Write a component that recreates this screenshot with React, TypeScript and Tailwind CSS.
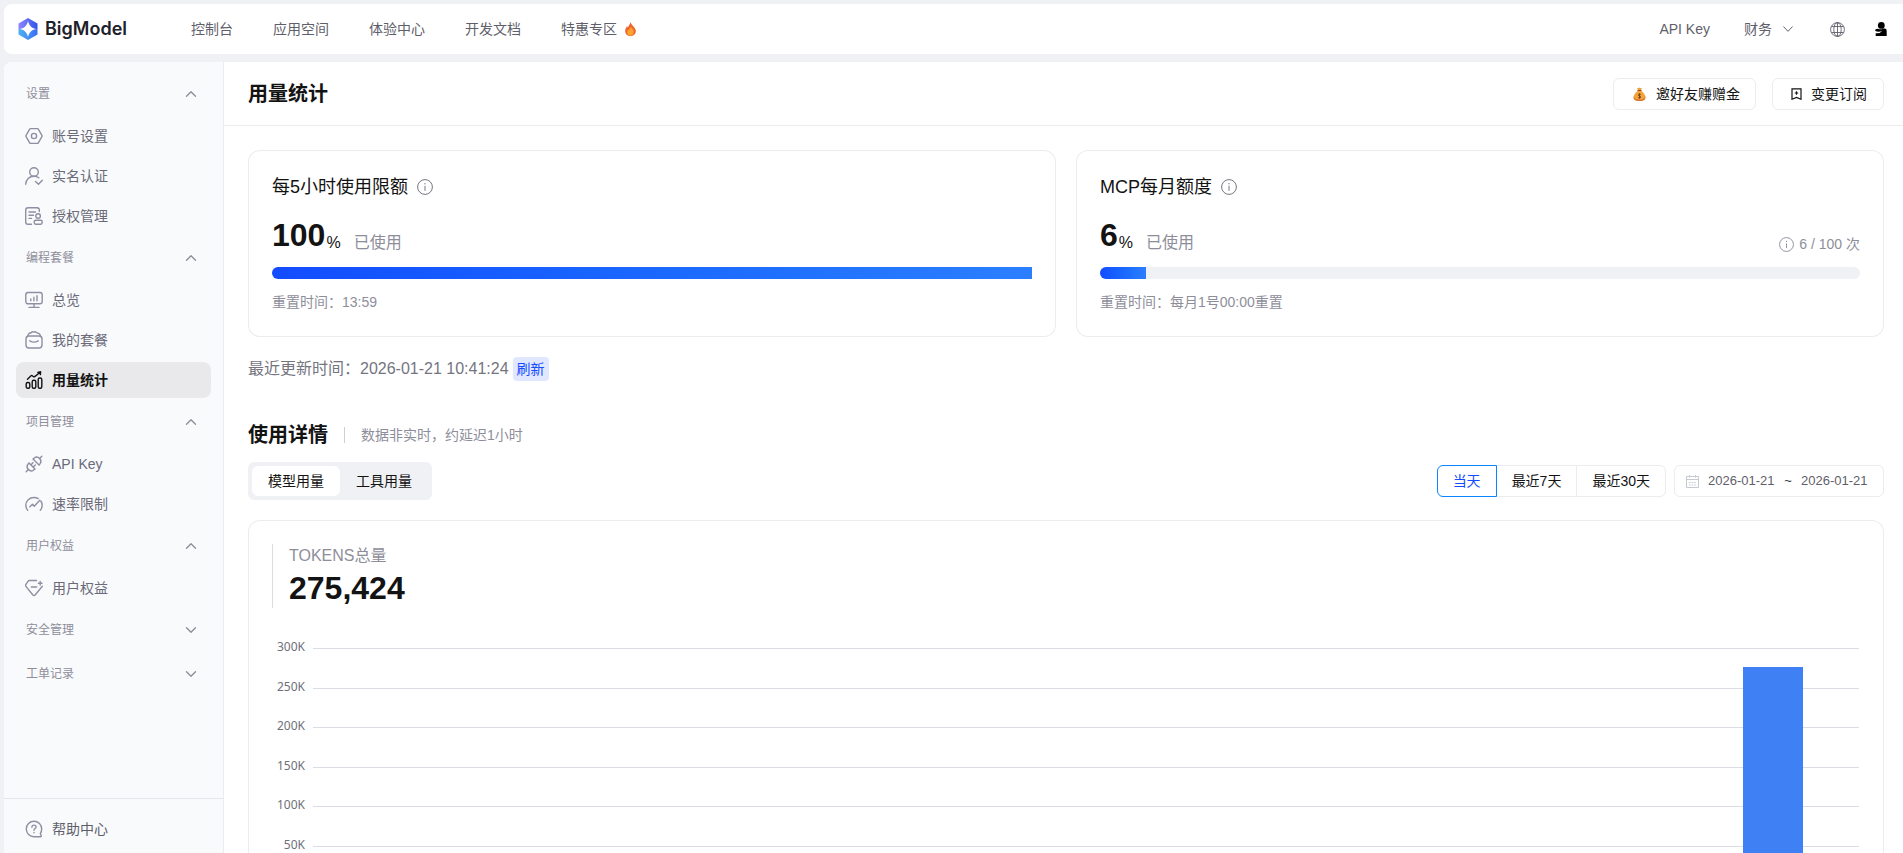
import { ReactNode, useState } from 'react';
import { ChevronDown, ChevronUp } from 'lucide-react';

const navLinks = ['控制台', '应用空间', '体验中心', '开发文档', '特惠专区'];

type MenuItem = { label: string; icon: ReactNode };
type MenuGroup = { title: string; open: boolean; items: MenuItem[] };

function Icon({ children }: { children: ReactNode }) {
  return (
    <svg
      className="h-[18px] w-[18px] shrink-0"
      viewBox="0 0 18 18"
      fill="none"
      stroke="currentColor"
      strokeWidth="1.4"
      strokeLinecap="round"
      strokeLinejoin="round"
      aria-hidden="true"
    >
      {children}
    </svg>
  );
}

const menu: MenuGroup[] = [
  {
    title: '设置',
    open: true,
    items: [
      {
        label: '账号设置',
        icon: (
          <Icon>
            <path d="M5.6 1.6h6.8q.6 0 .9.5l3.6 6.2q.4.7 0 1.4l-3.6 6.2q-.3.5-.9.5H5.6q-.6 0-.9-.5L1.1 9.7q-.4-.7 0-1.4l3.6-6.2q.3-.5.9-.5z" />
            <circle cx="9" cy="9" r="2.6" />
          </Icon>
        ),
      },
      {
        label: '实名认证',
        icon: (
          <Icon>
            <circle cx="9" cy="5" r="4.3" />
            <path d="M.7 17.3C.9 12.6 4.3 9.3 9 9.3c1.9 0 3.5.5 4.8 1.5" />
            <path d="M10.500 14.500l3 2.800 3.800-4.100" />
          </Icon>
        ),
      },
      {
        label: '授权管理',
        icon: (
          <Icon>
            <path d="M6.5 17.2H3q-2.3 0-2.3-2.3V3Q.7.8 3 .8h9q2.3 0 2.3 2.2v1.6" />
            <path d="M4 5h6.5M4 8.2h4.5M4 11.4h2.5" />
            <circle cx="13.1" cy="9" r="2.3" />
            <rect x="9.2" y="13.2" width="8" height="4" rx="1.6" />
          </Icon>
        ),
      },
    ],
  },
  {
    title: '编程套餐',
    open: true,
    items: [
      {
        label: '总览',
        icon: (
          <Icon>
            <rect x=".8" y="1.5" width="16.4" height="11.3" rx="2.2" />
            <path d="M9 12.8v3.4M4 16.4h10M5.8 9.8V8M8.9 9.8V6.300M12 9.800V4.800" />
          </Icon>
        ),
      },
      {
        label: '我的套餐',
        icon: (
          <Icon>
            <rect x="1" y="5" width="16" height="12" rx="3" />
            <path d="M2.3 5.6L3.6 3q.8-1.3 2.2-.9 1-2 3-1 1.3-.9 2.3.3l3 1.3q1 .5 1.6 2.8" />
            <path d="M4.8 9.8q4.2 2.6 8.4 0" />
          </Icon>
        ),
      },
      {
        label: '用量统计',
        icon: (
          <Icon>
            <rect x="1.2" y="11.500" width="3.600" height="5.800" rx="1.500" />
            <rect x="7.200" y="9.300" width="3.600" height="8" rx="1.500" />
            <rect x="13.200" y="7" width="3.600" height="10.300" rx="1.500" />
            <path d="M2.500 8.200L6 4.800q.6-.5 1.200-.1l1.300 1q.6.4 1.200-.1L15 1.500M12.800 1.400l2.800-.6-.2 2.800" />
          </Icon>
        ),
      },
    ],
  },
  {
    title: '项目管理',
    open: true,
    items: [
      {
        label: 'API Key',
        icon: (
          <Icon>
            <path d="M1.2 16.8l2.2-2.2M16.8 1.2l-2.2 2.2" />
            <path d="M4 7.9l6 6-1.7 1.4q-2.6 1.6-4.9-.7t-.7-4.9z" />
            <path d="M14 10.1l-6-6 1.7-1.4q2.6-1.6 4.9.7t.7 4.9z" />
            <path d="M6 9.8l2-2M8.3 12l2-2" />
          </Icon>
        ),
      },
      {
        label: '速率限制',
        icon: (
          <Icon>
            <path d="M2.7 15.2C1.5 13.8.8 12.2.8 10.3.8 5.7 4.5 2.5 9 2.5c1.6 0 3 .4 4.200 1.100M15.800 6c.9 1.300 1.400 2.700 1.400 4.300 0 1.900-.7 3.500-1.900 4.900" />
            <path d="M4.8 11.8l2.7-2.6 1.7 2.100 5.600-6" />
          </Icon>
        ),
      },
    ],
  },
  {
    title: '用户权益',
    open: true,
    items: [
      {
        label: '用户权益',
        icon: (
          <Icon>
            <path d="M11.5 1.500H4.600q-1 0-1.600.8L.9 5.400q-.7 1.200.2 2.200l6.600 8.200q1.300 1.300 2.600 0l7-8.600" />
            <path d="M6.300 8h5.400M15.200 2.400v3.600M13.400 4.200H17" />
          </Icon>
        ),
      },
    ],
  },
  { title: '安全管理', open: false, items: [] },
  { title: '工单记录', open: false, items: [] },
];

const ranges = ['当天', '最近7天', '最近30天'];
const usageTabs = ['模型用量', '工具用量'];

// Token usage per time slot, 0 where nothing was consumed
const maxTokens = 300000;
const ticks = ['300K', '250K', '200K', '150K', '100K', '50K'];
const usage = [0, 0, 0, 0, 0, 0, 0, 0, 275424];

function Logo() {
  return (
    <a href="#" className="flex items-center gap-[7px] text-[#1d2129]">
      <svg className="h-[22px] w-5" viewBox="0 0 20 22" aria-hidden="true">
        <defs>
          <linearGradient id="logoTop" x1="0" y1="0" x2="1" y2="0">
            <stop offset="0" stopColor="#8f86ff" />
            <stop offset="1" stopColor="#2f55e8" />
          </linearGradient>
          <linearGradient id="logoBottom" x1="0" y1="0" x2="1" y2="0">
            <stop offset="0" stopColor="#4cb4f5" />
            <stop offset="1" stopColor="#3b6cf6" />
          </linearGradient>
        </defs>
        <path d="M10 0l9.5 5.500V11H.5V5.500z" fill="url(#logoTop)" />
        <path d="M.5 11h19v5.500L10 22 .5 16.500z" fill="url(#logoBottom)" />
        <path d="M10 3c1.200 4.800 3.200 6.800 8 8-4.800 1.200-6.800 3.200-8 8-1.200-4.800-3.200-6.800-8-8 4.800-1.200 6.800-3.200 8-8z" fill="#fff" />
      </svg>
      <span className="font-[Inter,sans-serif] text-lg leading-6 font-semibold">BigModel</span>
    </a>
  );
}

function Flame() {
  return (
    <svg className="h-[14px] w-[11px]" viewBox="0 0 11 14" aria-hidden="true">
      <path d="M5.600 0c.3 1.800 1.500 2.800 2.700 4.200C9.800 5.900 10.800 7.300 10.800 9c0 3-2.300 5-5.300 5S.2 12 .2 9c0-1.900.8-3.300 1.900-4.700.2.600.4.900.8 1.200C3.500 3.600 5.100 2.300 5.600 0z" fill="#f0642f" />
      <path d="M5.800 5c1.700 1.700 3 3.300 3 5.200 0 2-1.300 3.400-3.300 3.400s-3.300-1.400-3.300-3.200c0-1.200.5-2.100 1.200-2.900.1.600.3.900.7 1.100.1-1.400.8-2.400 1.700-3.600z" fill="#fda32f" />
    </svg>
  );
}

function MoneyBag() {
  return (
    <svg className="h-[14px] w-[13px]" viewBox="0 0 13 14" aria-hidden="true">
      <path d="M4 .8q1.200.8 2.500-.4Q7.800 1.600 9 .8L7.900 3.300H5.100z" fill="#e9a13b" />
      <path d="M5 3.700h3c2.300 1.400 4.500 4.300 4.500 6.800 0 2.400-2 3.500-6 3.500s-6-1.100-6-3.500C.5 8 2.700 5.100 5 3.700z" fill="#f2a33a" />
      <path d="M.8 9c.6 3 3 3.600 5.700 3.600S11.600 12 12.200 9c.5 3.500-1 5-5.700 5S.3 12.500.8 9z" fill="#dc7433" />
      <path d="M4.800 3.500h3.400" stroke="#9c4d1c" strokeWidth="1" strokeLinecap="round" />
      <path d="M7.800 7.500c-.8-.7-2.600-.6-2.600.5s2.600.8 2.600 2-1.900 1.300-2.700.5M6.500 6.400v5.200" fill="none" stroke="#6b3a14" strokeWidth=".8" />
    </svg>
  );
}

function InfoIcon({ className }: { className: string }) {
  return (
    <svg className={className} viewBox="0 0 16 16" fill="none" stroke="currentColor" aria-hidden="true">
      <circle cx="8" cy="8" r="7.400" />
      <path d="M8 6.800v5M8 4v1.400" />
    </svg>
  );
}

function Header() {
  return (
    <header className="flex h-[50px] shrink-0 items-center rounded-l-lg bg-white pr-4 pl-[14px] text-sm text-[#5f5f6b]">
      <Logo />
      <nav className="ml-16 flex gap-10">
        {navLinks.map((link) => (
          <a key={link} href="#" className="flex items-center gap-2">
            {link}
            {link === '特惠专区' && <Flame />}
          </a>
        ))}
      </nav>
      <div className="ml-auto flex items-center">
        <a href="#">API Key</a>
        <button type="button" className="ml-[34px] flex items-center gap-[11px]">
          财务
          <svg className="h-[6px] w-[10px]" viewBox="0 0 10 6" fill="none" stroke="currentColor" aria-hidden="true">
            <path d="M.4.5L5 5.300 9.600.5" />
          </svg>
        </button>
        <button type="button" aria-label="语言" className="ml-[37px]">
          <svg className="h-[15px] w-[15px]" viewBox="0 0 15 15" fill="none" stroke="currentColor" strokeWidth=".9">
            <circle cx="7.500" cy="7.500" r="6.900" />
            <ellipse cx="7.500" cy="7.500" rx="3.700" ry="6.900" />
            <path d="M1.500 4.500h12M1.500 10.500h12M7.500.6v13.800" />
          </svg>
        </button>
        <button type="button" aria-label="个人中心" className="ml-[30px] text-black">
          <svg className="h-[14px] w-3" viewBox="0 0 12 14" fill="currentColor">
            <circle cx="6.300" cy="3.400" r="3.400" />
            <path d="M.3 7.600Q2.500 6.200 4.500 7.200q2 .5 3.500-.7h2q1.700.3 1.700 2.200V14H.7v-2.800q4.300.8 6.800-2.700Q4 10.700.3 9z" />
          </svg>
        </button>
      </div>
    </header>
  );
}

function Sidebar() {
  return (
    <aside className="flex w-[220px] shrink-0 flex-col border-r border-[#ebecf0] bg-[#f9fafc] text-[#6a6a78]">
      <nav className="flex-1 px-3 pt-[10px]">
        {menu.map((group) => (
          <div key={group.title}>
            <button
              type="button"
              aria-expanded={group.open}
              className="flex h-11 w-full items-center justify-between pr-[11px] pl-[10px] text-xs text-[#8e8e9b]"
            >
              {group.title}
              {group.open ? (
                <ChevronUp size={18} strokeWidth={1.8} />
              ) : (
                <ChevronDown size={18} strokeWidth={1.8} />
              )}
            </button>
            {group.items.length > 0 && (
              <div className="flex flex-col gap-1 py-[2px]">
                {group.items.map((item) => {
                  const active = item.label === '用量统计';
                  return (
                    <a
                      key={item.label}
                      href="#"
                      aria-current={active ? 'page' : undefined}
                      className={`flex h-9 items-center gap-[9px] rounded-lg pl-[9px] text-sm ${
                        active ? 'bg-[#e9e9eb] font-semibold text-[#131313]' : ''
                      }`}
                    >
                      <span className={active ? '' : 'text-[#8f8fa3]'}>{item.icon}</span>
                      {item.label}
                    </a>
                  );
                })}
              </div>
            )}
          </div>
        ))}
      </nav>
      <div className="border-t border-[#e6e7eb] px-3 pt-3 pb-[6px]">
        <a href="#" className="flex h-9 items-center gap-[9px] pl-[9px] text-sm text-[#5f5f6b]">
          <span className="text-[#8f8fa3]">
            <Icon>
              <path d="M9 16.700a7.700 7.700 0 1 1 7.700-7.700q0 2.500-1.400 4.500l.9 2.200q.3 1-.7 1z" />
              <path d="M6.900 7.200q.1-2.100 2.100-2.100t2.100 1.900q0 1.100-1.200 1.700-.9.500-.9 1.500M9 12.500v.2" />
            </Icon>
          </span>
          帮助中心
        </a>
      </div>
    </aside>
  );
}

type QuotaCardProps = {
  title: string;
  percent: number;
  reset: string;
  count?: string;
};

function QuotaCard({ title, percent, reset, count }: QuotaCardProps) {
  return (
    <section className="rounded-xl p-6 ring-1 ring-[#ebecf0] ring-inset">
      <div className="flex items-center gap-[9px]">
        <h2 className="text-lg leading-[26px] text-[#131313]">{title}</h2>
        <InfoIcon className="h-4 w-4 text-[#75757f]" />
      </div>
      <div className="mt-[15px] flex items-end justify-between">
        <div className="flex items-end">
          <span className="text-[32px] leading-10 font-bold text-[#131313]">{percent}</span>
          <span className="ml-px text-base leading-6 text-[#131313]">%</span>
          <span className="ml-[13px] text-base leading-6 text-[#8e8e9b]">已使用</span>
        </div>
        {count && (
          <div className="flex items-center gap-[5px] text-sm leading-[22px] text-[#8e8e9b]">
            <InfoIcon className="h-[15px] w-[15px]" />
            {count}
          </div>
        )}
      </div>
      <div className="mt-3 h-3 rounded-full bg-[#f0f1f5]">
        <div
          className="h-full rounded-l-full bg-gradient-to-r from-[#134cff] to-[#2b7fff]"
          style={{ width: `${percent}%` }}
        />
      </div>
      <p className="mt-[13px] text-sm leading-[21px] text-[#8e8e9b]">重置时间：{reset}</p>
    </section>
  );
}

function UsageChart() {
  return (
    <div className="mt-10 flex pr-px">
      {/* Y axis */}
      <div className="flex h-[237px] w-[33px] shrink-0 flex-col text-right font-['Noto_Sans',sans-serif] text-xs leading-4 text-[#6e7079]">
        {ticks.map((tick) => (
          <div key={tick} className="flex-1">
            <div className="-mt-[9px]">{tick}</div>
          </div>
        ))}
      </div>

      {/* Plot area */}
      <div className="relative ml-2 h-[237px] flex-1">
        <div className="flex h-full flex-col">
          {ticks.map((tick) => (
            <div key={tick} className="flex-1 border-t border-[#dcdde4]" />
          ))}
        </div>
        <div className="absolute inset-0 grid grid-cols-9">
          {usage.map((value, index) => (
            <div key={index} className="flex items-end justify-center">
              <div
                className="w-[60px] bg-[#4080f5]"
                style={{ height: `${(value / maxTokens) * 100}%` }}
              />
            </div>
          ))}
        </div>
      </div>
    </div>
  );
}

export default function App() {
  const [tab, setTab] = useState(usageTabs[0]);
  const [range, setRange] = useState(ranges[0]);

  return (
    <div className="flex h-screen flex-col gap-2 overflow-hidden bg-[#f0f1f5] pt-1 pl-1 font-['Liberation_Sans','Noto_Sans_CJK_SC',sans-serif]">
      <Header />
      <div className="flex min-h-0 flex-1 overflow-hidden rounded-tl-lg bg-white">
        <Sidebar />
        <main className="min-w-0 flex-1 overflow-hidden">
          {/* Page title */}
          <div className="flex h-16 items-center justify-between border-b border-[#ebecf0] pr-[19px] pl-6">
            <h1 className="text-xl font-bold text-[#131313]">用量统计</h1>
            <div className="flex gap-4 text-sm text-[#131313]">
              <button
                type="button"
                className="flex h-8 items-center gap-[10px] rounded-md border border-[#ebecf0] pr-[15px] pl-[19px]"
              >
                <MoneyBag />
                邀好友赚赠金
              </button>
              <button
                type="button"
                className="flex h-8 items-center gap-[9px] rounded-md border border-[#ebecf0] pr-4 pl-[18px]"
              >
                <svg className="h-3 w-[11px]" viewBox="0 0 11 12" fill="none" stroke="currentColor" strokeWidth="1.200" aria-hidden="true">
                  <path d="M1 .8h9v10.400L5.500 9.400 1 11.200z" />
                  <path d="M5.500 3.300v3.400M3.800 5h3.400" />
                </svg>
                变更订阅
              </button>
            </div>
          </div>

          <div className="pt-6 pr-[19px] pl-6">
            {/* Quotas */}
            <div className="grid grid-cols-2 gap-5">
              <QuotaCard title="每5小时使用限额" percent={100} reset="13:59" />
              <QuotaCard title="MCP每月额度" percent={6} reset="每月1号00:00重置" count="6 / 100 次" />
            </div>
            <div className="mt-5 flex items-center gap-1 text-base leading-6 text-[#75757f]">
              <p>最近更新时间：2026-01-21 10:41:24</p>
              <button type="button" className="h-6 rounded bg-[#e1e7ff] px-1 text-sm text-[#134cff]">
                刷新
              </button>
            </div>

            {/* Usage details */}
            <div className="mt-10 flex items-center">
              <h2 className="text-xl leading-7 font-bold text-[#131313]">使用详情</h2>
              <div className="mx-4 h-4 w-px bg-[#d0d1d8]" />
              <p className="text-sm text-[#8e8e9b]">数据非实时，约延迟1小时</p>
            </div>
            <div className="mt-[13px] flex items-center justify-between text-sm text-[#131313]">
              <div className="flex rounded-md bg-[#f0f1f5] p-1">
                {usageTabs.map((name) => (
                  <button
                    key={name}
                    type="button"
                    onClick={() => setTab(name)}
                    className={`h-[30px] rounded-md px-4 ${tab === name ? 'bg-white' : ''}`}
                  >
                    {name}
                  </button>
                ))}
              </div>
              <div className="flex gap-2">
                <div className="flex">
                  {ranges.map((name) => (
                    <button
                      key={name}
                      type="button"
                      onClick={() => setRange(name)}
                      className={`-ml-px h-8 border px-[15px] first:rounded-l-md last:rounded-r-md ${
                        range === name ? 'z-10 border-[#0a84ff] text-[#134cff]' : 'border-[#ebecf0]'
                      }`}
                    >
                      {name}
                    </button>
                  ))}
                </div>
                <div className="flex h-8 w-[210px] items-center rounded-md border border-[#ebecf0] pl-[11px] text-[13px] text-[#5f5f6b]">
                  <svg className="h-[13px] w-[13px] shrink-0 text-[#c6c9d2]" viewBox="0 0 13 13" fill="none" stroke="currentColor" aria-hidden="true">
                    <path d="M.5 1.500h12v11H.5zM.5 4.500h12M3.500 0v2.500M9.500 0v2.500" />
                    <path d="M3 7.500h7M3 10h7" strokeDasharray="1.600 1" />
                  </svg>
                  <input
                    type="text"
                    aria-label="开始日期"
                    defaultValue="2026-01-21"
                    className="ml-[9px] w-[67px]"
                  />
                  <span className="flex-1 text-center text-[#303133]">~</span>
                  <input
                    type="text"
                    aria-label="结束日期"
                    defaultValue="2026-01-21"
                    className="mr-[15px] w-[67px]"
                  />
                </div>
              </div>
            </div>

            {/* Chart */}
            <section className="mt-5 rounded-xl p-6 ring-1 ring-[#ebecf0] ring-inset">
              <div className="h-16 border-l border-[#dcdde4] pl-4">
                <p className="text-base leading-6 text-[#8e8e9b]">TOKENS总量</p>
                <p className="text-[32px] leading-10 font-bold text-[#131313]">275,424</p>
              </div>
              <UsageChart />
            </section>
          </div>
        </main>
      </div>
    </div>
  );
}
